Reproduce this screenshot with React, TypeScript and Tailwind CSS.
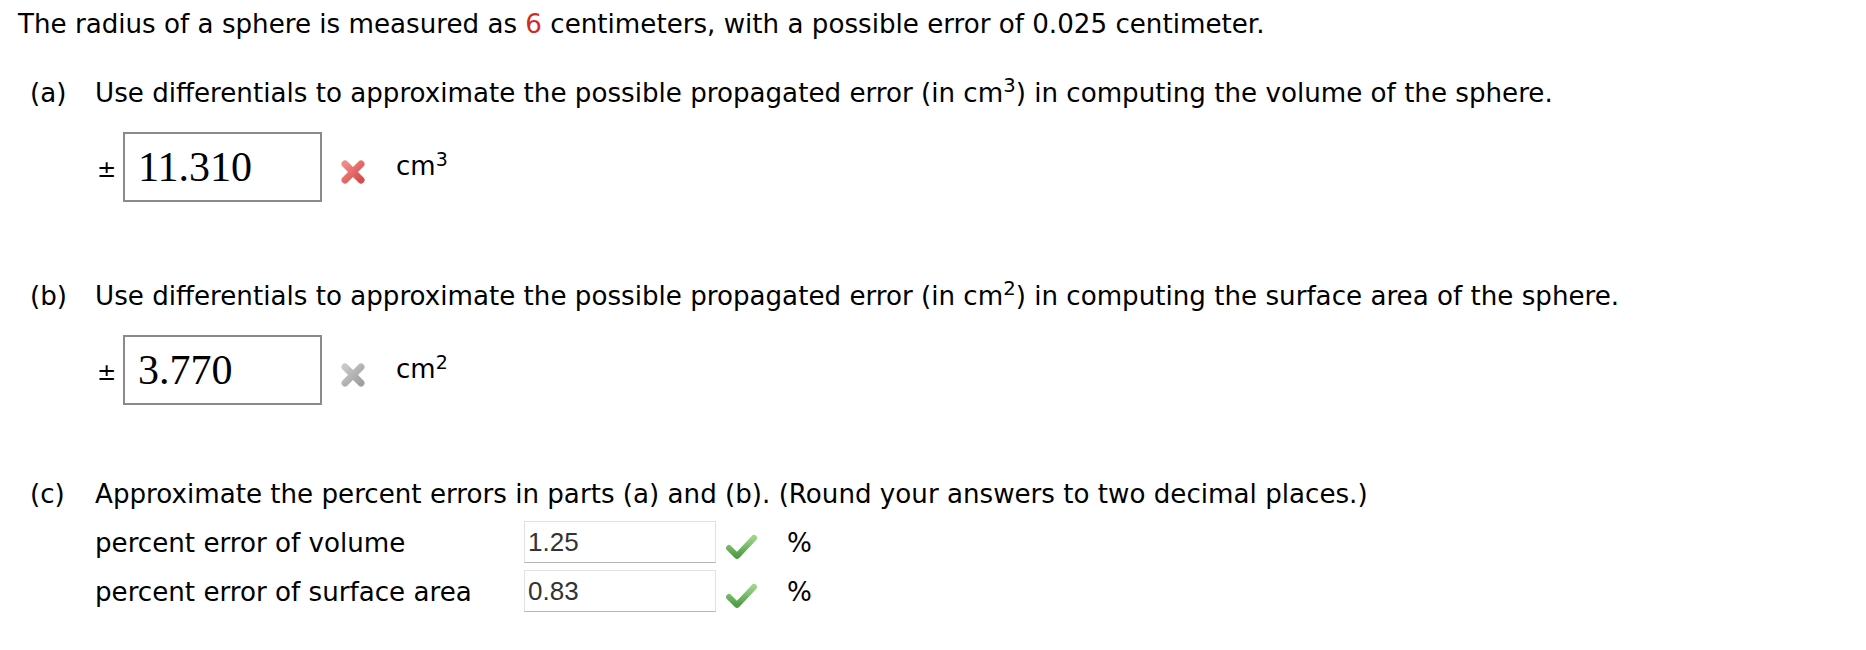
import React from "react";

function XIcon({ color, light }: { color: string; light: string }) {
  return (
    <svg width="26" height="26" viewBox="0 0 26 26">
      <defs>
        <linearGradient id={"g" + color.replace("#", "")} x1="0" y1="0" x2="1" y2="1">
          <stop offset="0" stopColor={light} />
          <stop offset="1" stopColor={color} />
        </linearGradient>
      </defs>
      <g stroke={"url(#g" + color.replace("#", "") + ")"} strokeWidth="7" strokeLinecap="round">
        <line x1="5" y1="5" x2="21" y2="21" />
        <line x1="21" y1="5" x2="5" y2="21" />
      </g>
    </svg>
  );
}

function CheckIcon() {
  return (
    <svg width="32" height="27" viewBox="0 0 32 27">
      <defs>
        <linearGradient id="chk" x1="0" y1="0" x2="0" y2="1">
          <stop offset="0" stopColor="#9bd48a" />
          <stop offset="1" stopColor="#4f9d45" />
        </linearGradient>
      </defs>
      <path
        d="M4 15 L12 23 L29 5"
        fill="none"
        stroke="url(#chk)"
        strokeWidth="6"
        strokeLinecap="round"
        strokeLinejoin="round"
      />
    </svg>
  );
}

function AnswerBox({ value, ok, unit, power }: { value: string; ok: boolean; unit: string; power: string }) {
  return (
    <div className="flex items-start ml-[79px]">
      <span className="mt-[26px] text-[23px] leading-[22px] w-[26px]">±</span>
      <div className="w-[199px] h-[70px] border-2 border-[#8a8a8a] pl-[13px] font-['Liberation_Serif',serif] text-[42px] leading-[62px] pt-[2px]">
        {value}
      </div>
      <div className="ml-[18px] mt-[27px]">
        {ok ? <XIcon color="#d94a4a" light="#f08a8a" /> : <XIcon color="#a0a0a0" light="#c8c8c8" />}
      </div>
      <span className="ml-[30px] mt-[19px] text-[26px] leading-[30px]">
        {unit}
        <sup className="text-[19px]">{power}</sup>
      </span>
    </div>
  );
}

function PercentRow({ label, value, mt }: { label: string; value: string; mt: string }) {
  return (
    <div className={"flex items-start " + mt}>
      <span className="w-[429px] mt-[7px] leading-[30px]">{label}</span>
      <div className="w-[192px] h-[42px] border border-[#e2e2e2] border-b-[#b4b4b4] px-[3px] pt-[3px] font-['Liberation_Sans',Arial,sans-serif] text-[26px] leading-[35px] text-[#333]">
        {value}
      </div>
      <div className="ml-[9px] mt-[12px]">
        <CheckIcon />
      </div>
      <span className="ml-[30px] mt-[7px] leading-[30px]">%</span>
    </div>
  );
}

export default function App() {
  return (
    <div className="min-h-[650px] w-[1866px] bg-white pl-[18px] pt-[9px] font-['DejaVu_Sans',Verdana,sans-serif] text-[26.15px] text-black">
      <p className="leading-[30px]">
        The radius of a sphere is measured as <span className="text-[#d22b1f]">6</span> centimeters, with a possible
        error of 0.025 centimeter.
      </p>

      <div className="flex ml-[12px] mt-[39px] leading-[30px]">
        <span className="w-[65px]">(a)</span>
        <span>
          Use differentials to approximate the possible propagated error (in cm<sup>3</sup>) in computing the volume of
          the sphere.
        </span>
      </div>
      <div className="mt-[24px]">
        <AnswerBox value="11.310" ok={true} unit="cm" power="3" />
      </div>

      <div className="flex ml-[12px] mt-[79px] leading-[30px]">
        <span className="w-[65px]">(b)</span>
        <span>
          Use differentials to approximate the possible propagated error (in cm<sup>2</sup>) in computing the surface
          area of the sphere.
        </span>
      </div>
      <div className="mt-[24px]">
        <AnswerBox value="3.770" ok={false} unit="cm" power="2" />
      </div>

      <div className="flex ml-[12px] mt-[74px] leading-[30px]">
        <span className="w-[65px]">(c)</span>
        <span>Approximate the percent errors in parts (a) and (b). (Round your answers to two decimal places.)</span>
      </div>
      <div className="ml-[77px]">
        <PercentRow label="percent error of volume" value="1.25" mt="mt-[12px]" />
        <PercentRow label="percent error of surface area" value="0.83" mt="mt-[7px]" />
      </div>
    </div>
  );
}
